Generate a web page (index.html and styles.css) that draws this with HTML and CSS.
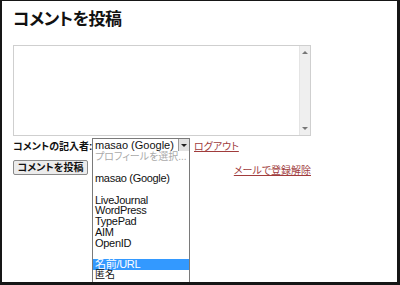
FILE: index.html
```html
<!DOCTYPE html>
<html lang="ja">

<head>
    <meta charset="UTF-8">
    <meta name="viewport" content="width=device-width, initial-scale=1.0">
    <title>コメントを投稿</title>
    <link rel="stylesheet" href="styles.css">
</head>

<body>
    <div class="frame">
        <h2 class="title">コメントを投稿</h2>
        <div class="comment_box">
            <div class="comment_text"></div>
            <div class="scroll">
                <span class="arrow_up"></span>
                <span class="arrow_down"></span>
            </div>
        </div>
        <div class="author_row">
            <span class="label">コメントの記入者:</span>
            <div class="select_wrap">
                <div class="select">
                    <span class="select_text">masao (Google)</span>
                    <span class="select_btn"><i></i></span>
                </div>
                <ul class="select_list">
                    <li class="muted jp">プロフィールを選択...</li>
                    <li></li>
                    <li>masao (Google)</li>
                    <li></li>
                    <li>LiveJournal</li>
                    <li>WordPress</li>
                    <li>TypePad</li>
                    <li>AIM</li>
                    <li>OpenID</li>
                    <li></li>
                    <li class="active">名前/URL</li>
                    <li class="jp">匿名</li>
                </ul>
            </div>
            <a href="JavaScript:" class="link">ログアウト</a>
        </div>
        <div class="submit_row">
            <button class="submit">コメントを投稿</button>
            <a href="JavaScript:" class="link mail">メールで登録解除</a>
        </div>
    </div>
</body>

</html>
```

FILE: styles.css
```css
* {
    margin: 0;
    padding: 0;
    box-sizing: border-box;
}

body {
    font-family: "Liberation Sans", "Noto Sans CJK JP", sans-serif;
    font-feature-settings: "palt";
    background-color: #fff;
}

ul {
    list-style: none;
}

.frame {
    width: 400px;
    height: 285px;
    padding: 8px 0 0 11px;
    border-style: solid;
    border-color: #161616;
    border-width: 1px 3px 3px 2px;
    overflow: hidden;
}

.title {
    font-size: 17px;
    line-height: 22px;
    font-weight: bold;
    letter-spacing: -0.5px;
    color: #111;
    white-space: nowrap;
}

.comment_box {
    display: flex;
    margin-top: 14px;
    width: 298px;
    height: 91px;
    border: 1px solid #cfcfcf;
}

.comment_text {
    flex: 1;
}

.scroll {
    position: relative;
    width: 11px;
    background-color: #efefef;
    border-left: 1px solid #e4e4e4;
}

.scroll span {
    position: absolute;
    left: 2px;
    width: 0;
    height: 0;
    border-left: 3px solid transparent;
    border-right: 3px solid transparent;
}

.arrow_up {
    top: 5px;
    border-bottom: 3px solid #777;
}

.arrow_down {
    bottom: 5px;
    border-top: 3px solid #777;
}

.author_row {
    display: flex;
    align-items: center;
    margin-top: 2px;
    height: 14px;
    font-size: 11px;
    white-space: nowrap;
}

.label {
    font-size: 10px;
    font-weight: bold;
    color: #111;
    width: 79px;
}

.select_wrap {
    position: relative;
    width: 98px;
    height: 14px;
}

.select {
    display: flex;
    height: 14px;
    border: 1px solid #7a7a7a;
    font-size: 11px;
    line-height: 12px;
}

.select_text {
    flex: 1;
    padding-left: 2px;
    color: #111;
}

.select_btn {
    display: flex;
    align-items: center;
    justify-content: center;
    width: 11px;
    background-color: #e2e2e2;
    border-left: 1px solid #9a9a9a;
}

.select_btn i {
    width: 0;
    height: 0;
    border-left: 3px solid transparent;
    border-right: 3px solid transparent;
    border-top: 3px solid #222;
}

.select_list {
    position: absolute;
    top: 13px;
    left: 0;
    width: 98px;
    height: 140px;
    padding-top: 1px;
    border: 1px solid #7a7a7a;
    border-top: none;
    background-color: #fff;
    font-size: 11px;
    line-height: 10.7px;
    color: #111;
    z-index: 10;
}

.select_list li {
    height: 10.7px;
    padding-left: 2px;
    letter-spacing: -0.3px;
}

.select_list .jp {
    font-size: 10px;
    letter-spacing: 0;
}

.select_list .muted {
    color: #aaa;
}

.select_list .active {
    background-color: #3399ff;
    color: #fff;
}

.link {
    margin-left: 4px;
    color: #a03c3c;
    font-size: 10px;
    text-decoration: underline;
}

.mail {
    margin-top: 4px;
}

.submit_row {
    display: flex;
    justify-content: space-between;
    align-items: center;
    width: 298px;
    margin-top: 6px;
}

.submit {
    width: 75px;
    height: 15px;
    font-family: inherit;
    font-feature-settings: "palt";
    font-size: 10px;
    font-weight: bold;
    line-height: 13px;
    color: #111;
    background-color: #ececec;
    border: 1px solid #8a8a8a;
    border-radius: 2px;
    white-space: nowrap;
}
```
